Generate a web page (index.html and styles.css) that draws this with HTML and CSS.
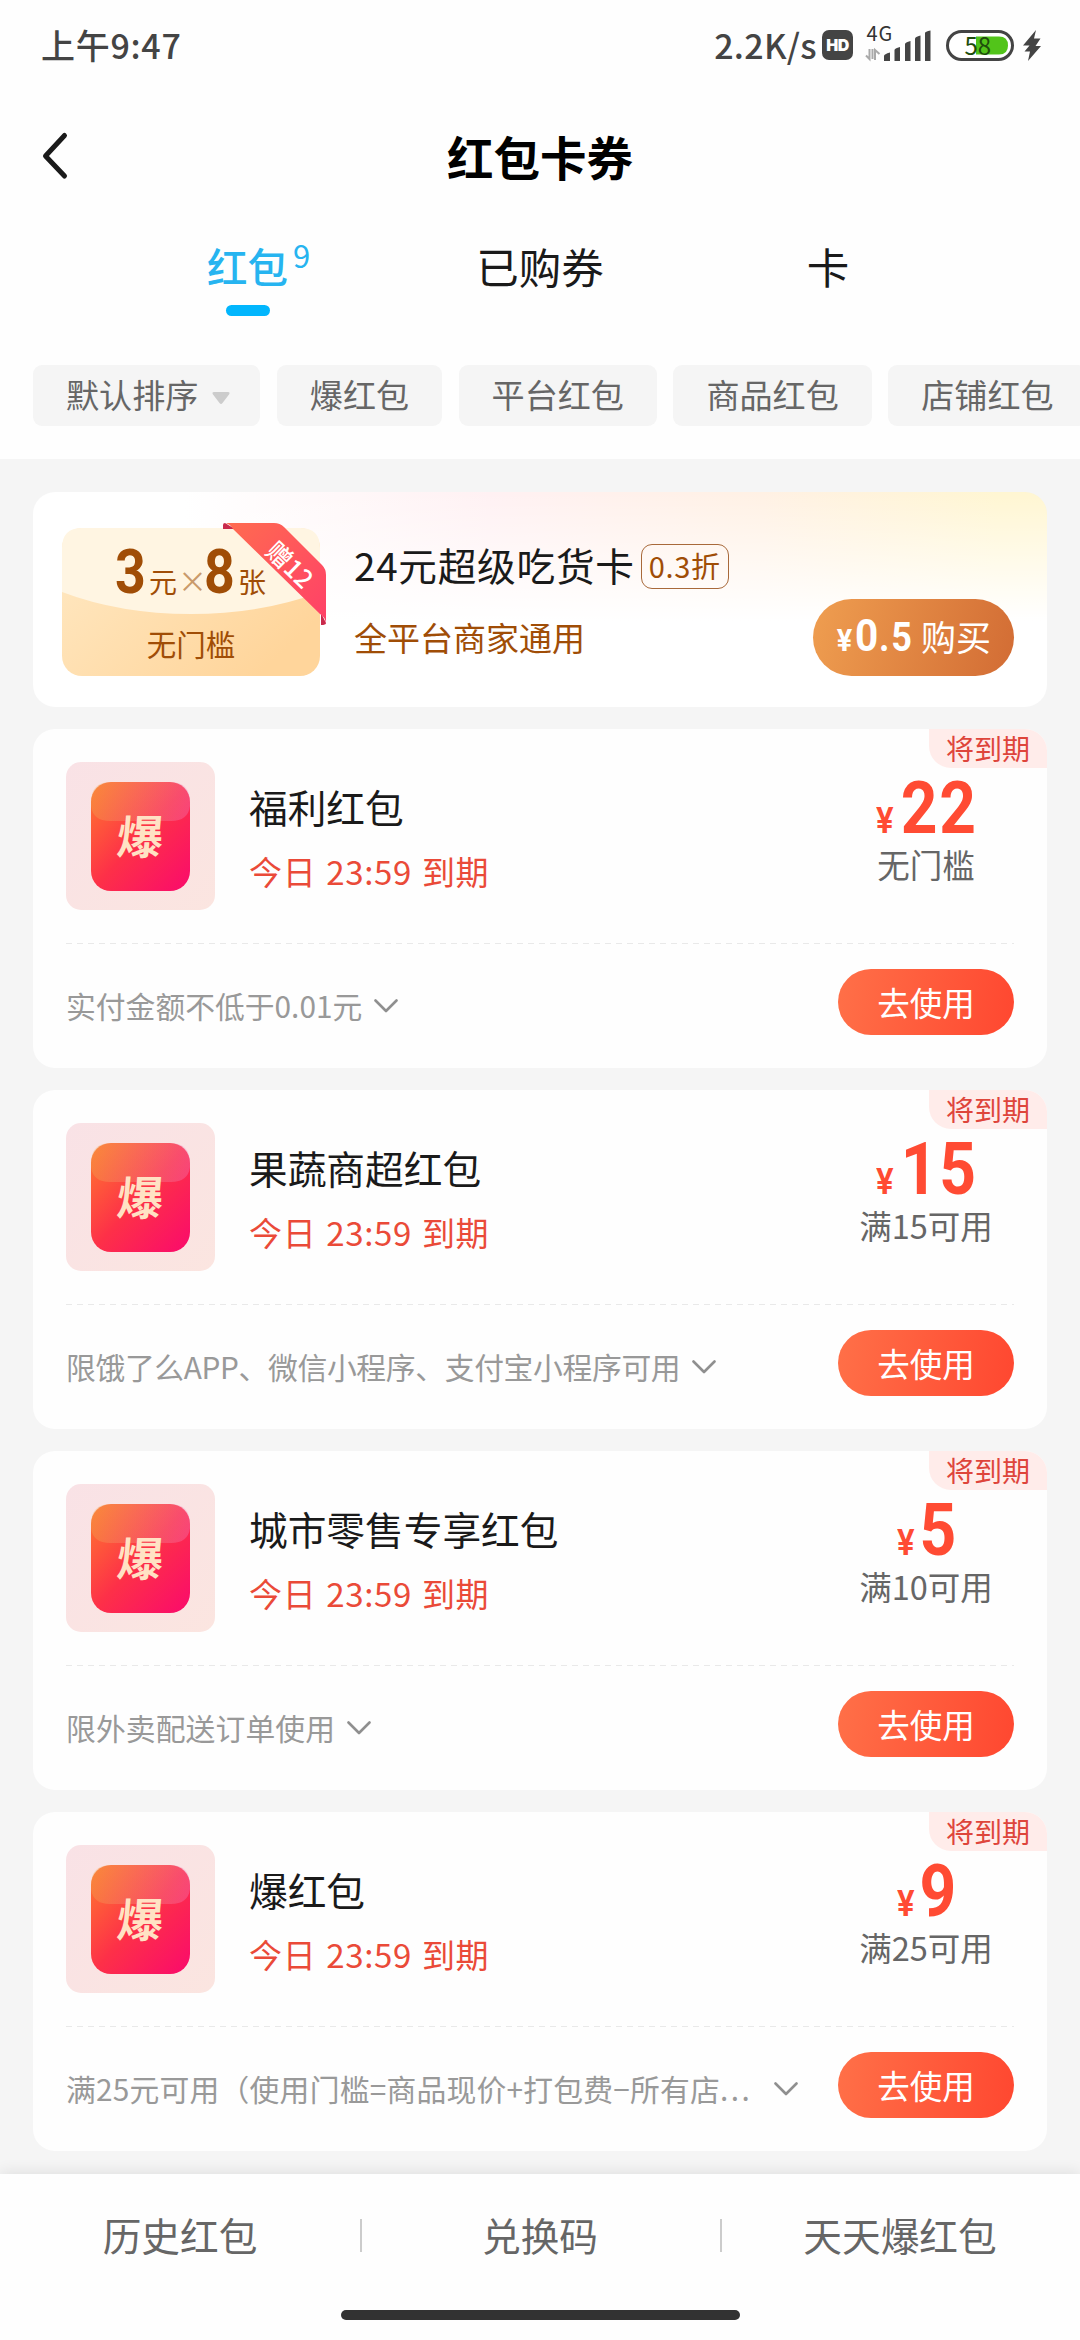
FILE: index.html
```html
<!DOCTYPE html>
<html lang="zh-CN">
<head>
<meta charset="utf-8">
<title>红包卡券</title>
<link rel="stylesheet" href="styles.css">
</head>
<body>
<svg class="defs" width="0" height="0" aria-hidden="true">
  <defs>
    <linearGradient id="packet" x1="0" y1="0" x2="1" y2="1">
      <stop offset="0" stop-color="#ff7a2e"/><stop offset=".5" stop-color="#fd3048"/><stop offset="1" stop-color="#fa0a6c"/>
    </linearGradient>
    <symbol id="chevron" viewBox="0 0 24 14"><path d="M1.5 1.5 12 12 22.5 1.5" fill="none" stroke="#8f8f8f" stroke-width="2.6" stroke-linecap="round" stroke-linejoin="round"/></symbol>
    <linearGradient id="gloss" x1="0" y1="0" x2="1" y2="0">
      <stop offset="0" stop-color="#f0a850"/><stop offset="1" stop-color="#f080c0"/>
    </linearGradient>
    <symbol id="packet-tile" viewBox="0 0 99 109">
      <rect width="99" height="109" rx="20" fill="url(#packet)"/>
      <path d="M0 20Q0 0 20 0H79Q99 0 99 20V24Q97 39 80 39H19Q2 39 0 24Z" fill="url(#gloss)" fill-opacity=".34"/>
    </symbol>
  </defs>
</svg>
<div class="app">
  <header class="top">
    <div class="status">
      <span class="clock">上午9:47</span>
      <div class="status-right">
        <span class="speed">2.2K/s</span>
        <span class="hd">HD</span>
        <svg class="signal" width="66" height="38" viewBox="0 0 66 38">
          <text x="1.500" y="18" class="net">4G</text>
          <g fill="#444"><path d="M19 38V33Q19 31 25 29.5V38Z"/><path d="M29.5 38V27Q29.500 25.500 35 24V38Z"/><path d="M40 38V21Q40 19.500 45.500 18V38Z"/><path d="M50 38V15.500Q50 14 55.500 12.500V38Z"/><path d="M60 38V10Q60 8.500 65.500 7.500V38Z"/></g>
          <path d="M4.500 26V36L1 32.500M10 37V27L14.500 31M7.500 26V36" fill="none" stroke="#aaa" stroke-width="2"/>
        </svg>
        <svg class="battery" width="68" height="31" viewBox="0 0 68 31">
          <rect x="1.500" y="1.500" width="65" height="28" rx="14" fill="#fff" stroke="#444" stroke-width="3"/>
          <path d="M30 6.500H53Q62 6.500 62 15.500T53 24.500H30Z" fill="#52c41a"/>
          <text x="18.500" y="24.500" class="level">58</text>
        </svg>
        <svg class="bolt" width="18" height="31" viewBox="0 0 18 31"><path d="M13 0 0 15.500H6.500L1.500 21.500H7L5 31 18 16H12.500L17.500 8.500H11Z" fill="#444"/></svg>
      </div>
    </div>
    <div class="nav">
      <svg class="back" width="28" height="48" viewBox="0 0 28 48"><path d="M23.500 3.500 4.500 24 23.500 44" fill="none" stroke="#1a1a1a" stroke-width="5" stroke-linecap="round" stroke-linejoin="round"/></svg>
      <h1>红包卡券</h1>
    </div>
    <nav class="tabs">
      <div class="tab active">红包<sup>9</sup></div>
      <div class="tab">已购券</div>
      <div class="tab">卡</div>
    </nav>
    <div class="chips">
      <span class="chip">默认排序<svg width="18" height="12" viewBox="0 0 18 12"><path d="M2 0H16Q18.500 0 17 2.500L10.500 11Q9 13 7.500 11L1 2.500Q-.5 0 2 0Z" fill="#ccc"/></svg></span>
      <span class="chip">爆红包</span>
      <span class="chip">平台红包</span>
      <span class="chip">商品红包</span>
      <span class="chip">店铺红包</span>
    </div>
  </header>

  <main class="list">
    <section class="promo">
      <div class="voucher">
        <svg class="voucher-bg" width="258" height="148" viewBox="0 0 258 148">
          <defs>
            <linearGradient id="vbase" x1="0" y1="0" x2="1" y2=".6"><stop offset="0" stop-color="#ffe9c4"/><stop offset="1" stop-color="#ffd59b"/></linearGradient>
          </defs>
          <rect width="258" height="148" rx="20" fill="url(#vbase)"/>
          <path d="M0 64V20Q0 0 20 0H238Q258 0 258 20V64Q200 86 129 86T0 64Z" fill="#fff5e2"/>
        </svg>
        <div class="amount"><b>3</b><span>元</span><i>×</i><b>8</b><span>张</span></div>
        <div class="limit">无门槛</div>
        <svg class="ribbon" width="104" height="102" viewBox="0 0 104 102">
          <defs><linearGradient id="rib" x1="0" y1="0" x2="1" y2="1"><stop offset="0" stop-color="#ff6b50"/><stop offset="1" stop-color="#ff4068"/></linearGradient></defs>
          <path d="M0 6V2Q0 0 2 0L12 6ZM98 90 103 100Q103 102 98 102Z" fill="#c92a4c"/>
          <path d="M3 0H51Q57 0 61 4L99 42Q103 46 103 52V100Q102 94 97 91L10 6Q8 2 3 0Z" fill="url(#rib)"/>
          <text class="gift" transform="translate(41 30) rotate(44)">赠12</text>
        </svg>
      </div>
      <div class="promo-info">
        <div class="promo-title">24元超级吃货卡<em>0.3折</em></div>
        <div class="promo-sub">全平台商家通用</div>
      </div>
      <button class="buy"><i>¥</i><b>0</b><b class="dec">.5</b><span>购买</span></button>
    </section>

    <section class="coupon">
      <div class="tag">将到期</div>
      <div class="main">
        <div class="icon"><svg width="99" height="109"><use href="#packet-tile"/></svg><span>爆</span></div>
        <div class="info"><div class="name">福利红包</div><div class="date">今日 23:59 到期</div></div>
        <div class="price"><div class="num"><i>¥</i><b>22</b></div><div class="cond">无门槛</div></div>
      </div>
      <div class="foot"><span class="note">实付金额不低于0.01元</span><svg class="chev" width="24" height="14"><use href="#chevron"/></svg><button class="use">去使用</button></div>
    </section>

    <section class="coupon">
      <div class="tag">将到期</div>
      <div class="main">
        <div class="icon"><svg width="99" height="109"><use href="#packet-tile"/></svg><span>爆</span></div>
        <div class="info"><div class="name">果蔬商超红包</div><div class="date">今日 23:59 到期</div></div>
        <div class="price"><div class="num"><i>¥</i><b>15</b></div><div class="cond">满15可用</div></div>
      </div>
      <div class="foot"><span class="note apps">限饿了么APP、微信小程序、支付宝小程序可用</span><svg class="chev" width="24" height="14"><use href="#chevron"/></svg><button class="use">去使用</button></div>
    </section>

    <section class="coupon">
      <div class="tag">将到期</div>
      <div class="main">
        <div class="icon"><svg width="99" height="109"><use href="#packet-tile"/></svg><span>爆</span></div>
        <div class="info"><div class="name">城市零售专享红包</div><div class="date">今日 23:59 到期</div></div>
        <div class="price"><div class="num"><i>¥</i><b>5</b></div><div class="cond">满10可用</div></div>
      </div>
      <div class="foot"><span class="note plain">限外卖配送订单使用</span><svg class="chev" width="24" height="14"><use href="#chevron"/></svg><button class="use">去使用</button></div>
    </section>

    <section class="coupon">
      <div class="tag">将到期</div>
      <div class="main">
        <div class="icon"><svg width="99" height="109"><use href="#packet-tile"/></svg><span>爆</span></div>
        <div class="info"><div class="name">爆红包</div><div class="date">今日 23:59 到期</div></div>
        <div class="price"><div class="num"><i>¥</i><b>9</b></div><div class="cond">满25可用</div></div>
      </div>
      <div class="foot"><span class="note long">满25元可用（使用门槛=商品现价+打包费−所有店<span class="dots">...</span></span><svg class="chev" width="24" height="14"><use href="#chevron"/></svg><button class="use">去使用</button></div>
    </section>
  </main>

  <footer class="bottom">
    <div class="links"><span>历史红包</span><span>兑换码</span><span>天天爆红包</span></div>
    <div class="home"></div>
  </footer>
</div>
</body>
</html>
```
FILE: styles.css
```css
* { box-sizing: border-box; margin: 0; padding: 0; }
body {
  width: 1080px;
  height: 2340px;
  overflow: hidden;
  background: #f5f5f5;
  font-family: "Noto Sans CJK SC", sans-serif;
  font-weight: 400;
  color: #1a1a1a;
}
i, em { font-style: normal; }
button { border: 0; font: inherit; }
svg { overflow: visible; }
.defs { position: absolute; }
.app { width: 1080px; height: 2340px; display: flex; flex-direction: column; }

/* header */
.top { flex: none; height: 459px; background: #fefefe; overflow: hidden; }
.status { height: 90px; padding: 0 39px 0 41px; display: flex; justify-content: space-between; color: #444; }
.clock { font-size: 34px; line-height: 89px; font-weight: 500; letter-spacing: .7px; }
.status-right { display: flex; align-items: flex-start; padding-top: 30px; }
.speed { font-size: 34px; line-height: 34px; margin-top: -2px; margin-right: 5px; font-weight: 500; letter-spacing: .3px; }
.hd { width: 31px; height: 30px; border-radius: 7px; background: #444; color: #fff; font: 900 16px/30px Inter, sans-serif; text-align: center; margin-right: 12px; letter-spacing: -.5px; }
.signal { margin: -7px 15px 0 0; }
.net { font: 400 20px "Noto Sans CJK SC", sans-serif; fill: #333; letter-spacing: 1px; }
.level { font: 400 24px "Noto Sans CJK SC", sans-serif; fill: #1e4d0c; }
.bolt { margin-left: 9px; }
.nav { height: 132px; display: flex; align-items: center; padding-left: 41px; }
.nav h1 { flex: 1; text-align: center; font-size: 46.500px; font-weight: 700; line-height: 60px; color: #000; padding-right: 69px; }
.tabs { height: 143px; padding: 0 108px; display: grid; grid-template-columns: repeat(3, 288px); text-align: center; }
.tab { position: relative; font-size: 42.500px; line-height: 87px; }
.tab.active { color: #26b4f0; font-weight: 500; font-size: 40.500px; padding-right: 9px; }
.tab.active::after { content: ""; position: absolute; left: 118px; top: 83px; width: 44px; height: 11px; border-radius: 6px; background: #02b6fd; }
.tab sup { position: absolute; left: 185px; top: -11px; font-size: 31px; font-weight: 400; }
.chips { display: flex; gap: 16.500px; padding-left: 33px; }
.chip { flex: none; height: 61px; padding: 0 33px; border-radius: 9px; background: #f5f5f5; color: #666; font-size: 33.100px; line-height: 58px; white-space: nowrap; }
.chip svg { margin: 0 -3px 4px 14px; }

/* list */
.list { flex: 1; min-height: 0; padding: 33px 33px 0; display: flex; flex-direction: column; gap: 22px; }
.promo {
  flex: none; height: 215px; border-radius: 22px; padding: 36px 33px 0 29px; display: flex;
  background: linear-gradient(180deg, rgba(255,255,255,0) 0, #fff 60%), linear-gradient(90deg, #fff 15%, #fff1f3 45%, #fff1e4 72%, #fff6d2 95%);
}
.voucher { position: relative; width: 258px; height: 148px; color: #a04d06; }
.voucher-bg { position: absolute; left: 0; top: 0; }
.amount { position: relative; height: 90px; padding-left: 53px; display: flex; align-items: baseline; line-height: 88px; font-size: 28px; white-space: nowrap; }
.amount b { font-family: Roboto, sans-serif; font-weight: 700; font-size: 61px; width: 34px; transform: scaleX(.88); transform-origin: left; }
.amount span { width: 29px; }
.amount i { width: 26px; text-align: center; font-size: 29px; color: #c99a6a; }
.limit { position: relative; text-align: center; font-size: 29.500px; line-height: 51px; }
.ribbon { position: absolute; left: 161px; top: -5px; }
.gift { font: 500 25px "Noto Sans CJK SC", sans-serif; fill: #fff; }
.promo-info { flex: 1; padding-left: 34px; }
.promo-title { display: flex; align-items: center; height: 72px; font-size: 38.700px; letter-spacing: .7px; white-space: nowrap; }
.promo-title em { margin: 5px 0 0 6px; width: 88px; height: 45px; border: 1.500px solid #a8693a; border-radius: 11px; color: #a04d06; font-size: 29px; line-height: 41px; text-align: center; }
.promo-sub { font-size: 33px; line-height: 60px; margin-top: 7px; color: #a04d06; }
.buy { width: 201px; height: 77px; margin-top: 71px; border-radius: 39px; background: linear-gradient(105deg, #ef9e50, #d26c34); color: #fff; display: flex; align-items: baseline; padding-left: 23px; line-height: 73px; white-space: nowrap; }
.buy i, .buy b { font-family: Roboto, sans-serif; font-weight: 700; transform: scaleX(.9); transform-origin: left; }
.buy i { font-size: 32px; width: 19px; }
.buy b { font-size: 45px; width: 24px; }
.buy .dec { font-size: 40px; letter-spacing: 2px; width: 37px; }
.buy span { font-size: 35px; margin-left: 5px; }

.coupon { position: relative; flex: none; height: 339px; border-radius: 22px; background: #fefefe; padding: 0 33px; }
.tag { position: absolute; right: 0; top: 0; width: 118px; height: 39px; background: #ffecea; color: #de453b; border-radius: 0 22px 0 22px; font-size: 28px; line-height: 38px; padding-left: 17px; }
.main { height: 215px; padding-top: 33px; display: flex; background: linear-gradient(90deg, #e9e9e9 55%, transparent 55%) 0 100% / 11px 1.500px repeat-x; }
.icon { position: relative; width: 149px; height: 148px; border-radius: 15px; background: linear-gradient(135deg, #f9e2e6, #fbe5e0); display: grid; place-items: center; }
.icon span { position: absolute; left: 0; top: 0; width: 149px; text-align: center; font-size: 46px; line-height: 145px; font-weight: 700; color: #ffe2c4; transform: skewX(-5deg); }
.info { flex: 1; padding-left: 34px; white-space: nowrap; }
.name { font-size: 38.700px; line-height: 56px; margin-top: 16px; }
.date { font-size: 33px; line-height: 48px; margin-top: 13px; color: #ea4a38; letter-spacing: .7px; word-spacing: 1.700px; }
.price { width: 176px; text-align: center; color: #ff4b33; }
.num { height: 84px; display: flex; justify-content: center; align-items: baseline; line-height: 93px; white-space: nowrap; }
.num b, .num i { font-family: Roboto, sans-serif; transform: scaleX(.89); }
.num b { font-size: 72px; font-weight: 700; letter-spacing: 2px; margin: 0 -5px 0 0; }
.num i { font-size: 37px; font-weight: 600; margin-right: 1px; }
.cond { font-size: 32.500px; line-height: 36px; color: #666; }
.foot { height: 124px; display: flex; align-items: center; }
.note { font-size: 29.800px; color: #999; white-space: nowrap; margin-top: -3px; }
.note.apps { letter-spacing: -.35px; }
.note.plain { letter-spacing: .1px; }
.note.long { letter-spacing: .22px; }
.note .dots { letter-spacing: 2.400px; }
.chev { margin-left: 12px; }
.note.long + .chev { margin-left: 22px; }
.use { margin-left: auto; width: 176px; height: 66px; margin-bottom: 9px; border-radius: 33px; background: linear-gradient(100deg, #ff7048, #ff4730); color: #fff; font-size: 32.500px; line-height: 62px; }

/* footer */
.bottom { position: relative; flex: none; height: 166px; background: #fefefe; box-shadow: 0 -2px 14px rgba(0,0,0,.09); }
.links { display: grid; grid-template-columns: repeat(3, 360px); text-align: center; font-size: 38.700px; line-height: 121px; color: #666; }
.links span + span { background: linear-gradient(#ccc, #ccc) 0 45px / 2px 33px no-repeat; }
.home { width: 399px; height: 10px; margin: 15px auto 0; border-radius: 5px; background: #323232; }
```
